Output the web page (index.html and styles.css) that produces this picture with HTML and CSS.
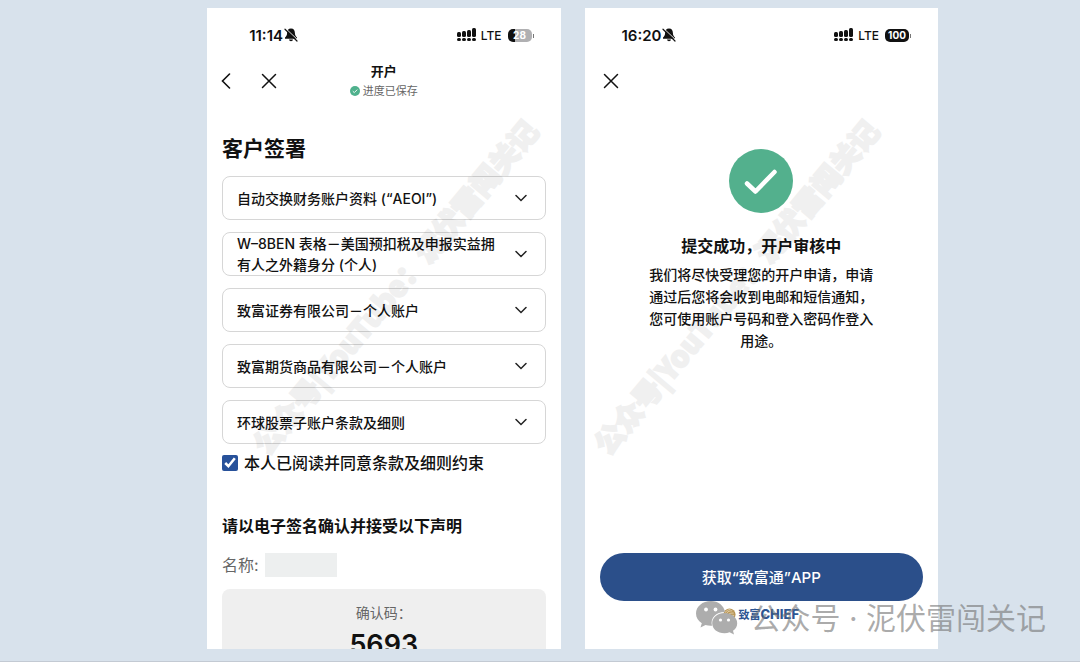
FILE: index.html
```html
<!DOCTYPE html>
<html lang="zh-CN">
<head>
    <meta charset="UTF-8">
    <meta name="viewport" content="width=device-width, initial-scale=1.0">
    <title>开户</title>
    <link rel="stylesheet" href="styles.css">
</head>
<body>
    <!-- Shared icons -->
    <svg class="sprite" aria-hidden="true">
        <symbol id="bell-off" viewBox="0 0 14 14">
            <path d="M7 0.600C4.200 0.600 3.200 2.600 3.100 5 3 7.600 2.100 8.500 1 9.600V10.800H13V9.600C11.900 8.500 11 7.600 10.900 5 10.800 2.600 9.800 0.600 7 0.600Z" fill="#111"/>
            <path d="M5 11.600H9C8.700 13.800 5.300 13.800 5 11.600Z" fill="#111"/>
            <path d="M2 0.800 13.800 12" stroke="#fff" stroke-width="1"/>
            <path d="M1 1.200 13 13" stroke="#111" stroke-width="1.200" stroke-linecap="round"/>
        </symbol>
        <symbol id="signal" viewBox="0 0 20 14">
            <g fill="#111">
                <rect x="0" y="4" width="4" height="5" rx="1.500"/>
                <rect x="5" y="3" width="4" height="6" rx="1.500"/>
                <rect x="10" y="2" width="4" height="7" rx="1.500"/>
                <rect x="15" y="0" width="4" height="9" rx="1.500"/>
                <rect x="0" y="10" width="4" height="3" rx="1.500"/>
                <rect x="5" y="10" width="4" height="3" rx="1.500"/>
                <rect x="10" y="10" width="4" height="3" rx="1.500"/>
                <rect x="15" y="10" width="4" height="3" rx="1.500"/>
            </g>
        </symbol>
        <symbol id="close" viewBox="0 0 16 16">
            <path d="M1.500 1.500 14.500 14.500M14.500 1.500 1.500 14.500" fill="none" stroke="#111" stroke-width="1.500" stroke-linecap="round"/>
        </symbol>
        <symbol id="back" viewBox="0 0 10 16">
            <path d="M8.500 1 1.500 8 8.500 15" fill="none" stroke="#111" stroke-width="1.600" stroke-linecap="round"/>
        </symbol>
        <symbol id="chevron" viewBox="0 0 12 8">
            <path d="M1 1.500 6 6.500 11 1.500" fill="none" stroke="#222" stroke-width="1.500" stroke-linecap="round"/>
        </symbol>
    </svg>

    <main class="stage">
        <!-- Signing screen -->
        <section class="phone">
            <div class="status-bar">
                <span class="time">11:14</span>
                <svg class="bell"><use href="#bell-off"/></svg>
                <svg class="signal"><use href="#signal"/></svg>
                <span class="network">LTE</span>
                <span class="battery battery-low">28</span>
            </div>
            <header class="nav-bar">
                <button class="icon-btn" aria-label="返回"><svg class="back-icon"><use href="#back"/></svg></button>
                <button class="icon-btn" aria-label="关闭"><svg class="close-icon"><use href="#close"/></svg></button>
                <div class="nav-title">
                    <h1>开户</h1>
                    <p>
                        <svg class="saved-icon" viewBox="0 0 10 10">
                            <circle cx="5" cy="5" r="5" fill="#4fb18d"/>
                            <path d="M2.800 5.200 4.300 6.600 7.300 3.600" fill="none" stroke="#fff" stroke-width="0.900"/>
                        </svg>
                        进度已保存
                    </p>
                </div>
            </header>
            <div class="content">
                <h2>客户签署</h2>
                <div class="doc-list">
                    <button class="doc" aria-expanded="false"><span>自动交换财务账户资料 (“AEOI”)</span><svg class="chevron"><use href="#chevron"/></svg></button>
                    <button class="doc" aria-expanded="false"><span>W–8BEN 表格－美国预扣税及申报实益拥有人之外籍身分 (个人)</span><svg class="chevron"><use href="#chevron"/></svg></button>
                    <button class="doc" aria-expanded="false"><span>致富证券有限公司－个人账户</span><svg class="chevron"><use href="#chevron"/></svg></button>
                    <button class="doc" aria-expanded="false"><span>致富期货商品有限公司－个人账户</span><svg class="chevron"><use href="#chevron"/></svg></button>
                    <button class="doc" aria-expanded="false"><span>环球股票子账户条款及细则</span><svg class="chevron"><use href="#chevron"/></svg></button>
                </div>
                <div class="agree">
                    <input type="checkbox" id="agree" checked>
                    <label for="agree">本人已阅读并同意条款及细则约束</label>
                </div>
                <h3>请以电子签名确认并接受以下声明</h3>
                <div class="name-row">
                    <span>名称:</span>
                    <span class="name-mask"></span>
                </div>
                <div class="code-card">
                    <p>确认码：</p>
                    <strong>5693</strong>
                </div>
            </div>
            <div class="watermark watermark-center" aria-hidden="true">公众号|YouTube：泥伏雷闯关记</div>
        </section>

        <!-- Submitted screen -->
        <section class="phone">
            <div class="status-bar">
                <span class="time">16:20</span>
                <svg class="bell"><use href="#bell-off"/></svg>
                <svg class="signal"><use href="#signal"/></svg>
                <span class="network">LTE</span>
                <span class="battery">100</span>
            </div>
            <header class="nav-bar">
                <button class="icon-btn" aria-label="关闭"><svg class="close-icon"><use href="#close"/></svg></button>
            </header>
            <div class="result">
                <svg class="result-icon" viewBox="0 0 64 64">
                    <circle cx="32" cy="32" r="32" fill="#53b08d"/>
                    <path d="M18 34.500 26.500 42.500 45.500 23" fill="none" stroke="#fff" stroke-width="4.500" stroke-linecap="round" stroke-linejoin="round"/>
                </svg>
                <h2>提交成功，开户审核中</h2>
                <p>我们将尽快受理您的开户申请，申请通过后您将会收到电邮和短信通知，您可使用账户号码和登入密码作登入用途。</p>
            </div>
            <footer class="actions">
                <button class="primary-btn">获取“致富通”APP</button>
                <div class="brand">
                    <svg class="brand-icon" viewBox="0 0 14 14">
                        <circle cx="7" cy="7" r="6.500" fill="#b89556"/>
                        <path d="M3 11C2 6 5 3 10 3M5 11.500C4 8 6 5 11.500 5.500M7.500 11C7 8.500 9 7.500 12 8M2 5C4 3 5 2 8 1.500" fill="none" stroke="#efe3c6" stroke-width="0.800"/>
                    </svg>
                    <span class="brand-cn">致富</span><span class="brand-en">CHIEF</span>
                </div>
            </footer>
            <div class="watermark watermark-left" aria-hidden="true">公众号|YouTube：泥伏雷闯关记</div>
        </section>

        <!-- Account signature over the lower right corner -->
        <div class="signature">
            <svg class="wechat" viewBox="0 0 42 34">
                <path d="M15 0C6.500 0 0 5.500 0 12.500 0 16.500 2.200 20 5.800 22.300L4.500 26.500 9.500 24C11.500 24.600 13.500 25 16 24.800 14 17 20 11 29 11 28 4.500 22 0 15 0Z"/>
                <path d="M28.500 12C21.500 12 16.200 16.500 16.200 22.200S21.500 32.200 28.500 32.200C30.300 32.200 32 31.900 33.600 31.300L38 33.500 37 29.800C39.800 28 41.200 25.200 41.200 22.200 41.200 16.500 35.500 12 28.500 12Z"/>
                <g fill="#fff">
                    <circle cx="10" cy="8.500" r="1.900"/>
                    <circle cx="19.500" cy="8.500" r="1.900"/>
                    <circle cx="24.500" cy="19" r="1.600"/>
                    <circle cx="32.500" cy="19" r="1.600"/>
                </g>
            </svg>
            <span>公众号 · 泥伏雷闯关记</span>
        </div>
    </main>
</body>
</html>
```

FILE: styles.css
```css
* {
    box-sizing: border-box;
}
body {
    margin: 0;
    background-color: #d8e2ec;
    color: #111;
    font-family: Inter, "Noto Sans CJK SC", sans-serif;
}
h1, h2, h3, p {
    margin: 0;
}
button {
    border: none;
    background: none;
    padding: 0;
    color: inherit;
    font-family: inherit;
    cursor: pointer;
}
svg {
    display: block;
    flex: none;
}
.sprite {
    position: absolute;
    width: 0;
    height: 0;
}
.stage {
    position: relative;
    display: flex;
    gap: 24px;
    height: 100vh;
    padding: 8px 142px 12px 207px;
    border-bottom: 1px solid #c3cad3;
}
.phone {
    position: relative;
    flex: 1;
    display: flex;
    flex-direction: column;
    background: white;
    overflow: hidden;
}

/* status bar */
.status-bar {
    flex: none;
    display: flex;
    align-items: center;
    height: 54px;
    padding: 0 29px 0 37px;
}
.time {
    min-width: 39px;
    font-size: 15px;
    font-weight: 600;
    text-align: right;
}
.bell {
    width: 14px;
    height: 14px;
    margin-left: 1px;
}
.signal {
    width: 20px;
    height: 14px;
    margin-left: auto;
}
.network {
    margin: 0 6px 0 4px;
    font-size: 12px;
    font-weight: 500;
}
.battery {
    position: relative;
    width: 24px;
    border-radius: 5px;
    background: #111;
    color: white;
    font-size: 10px;
    font-weight: 700;
    line-height: 13px;
    text-align: center;
}
.battery::after {
    content: "";
    position: absolute;
    left: 25px;
    top: 5px;
    width: 1px;
    height: 4px;
    background: #777;
}
.battery-low {
    background: linear-gradient(to right, #111 28%, #b0b0b2 28%);
}

/* navigation */
.nav-bar {
    position: relative;
    flex: none;
    display: flex;
    align-items: center;
    gap: 26px;
    height: 38px;
    padding: 0 14px;
}
.icon-btn {
    min-width: 10px;
}
.back-icon {
    width: 10px;
    height: 16px;
}
.close-icon {
    width: 16px;
    height: 16px;
    margin: 0 4px;
}
.nav-title {
    position: absolute;
    left: 0;
    right: 0;
    top: 0;
    text-align: center;
    pointer-events: none;
}
.nav-title h1 {
    font-size: 13px;
    font-weight: 700;
    line-height: 18px;
}
.nav-title p {
    display: flex;
    align-items: center;
    justify-content: center;
    gap: 3px;
    color: #666;
    font-size: 11px;
    line-height: 22px;
}
.saved-icon {
    width: 10px;
    height: 10px;
}

/* signing form */
.content {
    flex: none;
    padding: 33px 15px 0;
}
.content h2 {
    font-size: 21px;
    font-weight: 700;
    line-height: 32px;
}
.doc-list {
    display: flex;
    flex-direction: column;
    gap: 12px;
    margin-top: 11px;
}
.doc {
    display: flex;
    align-items: center;
    justify-content: space-between;
    gap: 10px;
    height: 44px;
    padding: 0 18px 0 14px;
    border: 1px solid #d6d6d6;
    border-radius: 8px;
    font-size: 14px;
    font-weight: 500;
    line-height: 21px;
    text-align: left;
}
.chevron {
    width: 12px;
    height: 8px;
}
.agree {
    display: flex;
    align-items: center;
    gap: 6px;
    margin-top: 7px;
    font-size: 16px;
    font-weight: 500;
    line-height: 24px;
}
.agree input {
    flex: none;
    width: 16px;
    height: 16px;
    margin: 0;
    accent-color: #27519a;
}
.content h3 {
    margin-top: 39px;
    font-size: 16px;
    font-weight: 700;
    line-height: 24px;
}
.name-row {
    display: flex;
    gap: 6px;
    margin-top: 15px;
    color: #666;
    font-size: 16px;
    line-height: 24px;
}
.name-mask {
    width: 72px;
    background: #edefef;
}
.code-card {
    height: 120px;
    margin-top: 12px;
    padding-top: 12px;
    border-radius: 8px;
    background: #efefef;
    text-align: center;
}
.code-card p {
    color: #666;
    font-size: 14px;
    line-height: 24px;
}
.code-card strong {
    display: block;
    font-size: 27px;
    font-weight: 600;
    line-height: 40px;
}

/* submitted screen */
.result {
    display: flex;
    flex-direction: column;
    align-items: center;
    padding-top: 49px;
}
.result-icon {
    width: 64px;
    height: 64px;
}
.result h2 {
    margin-top: 21px;
    font-size: 16px;
    font-weight: 700;
    line-height: 24px;
}
.result p {
    width: 232px;
    margin-top: 6px;
    font-size: 14px;
    font-weight: 500;
    line-height: 22px;
    text-align: center;
}
.actions {
    margin-top: auto;
    padding: 0 15px 27px;
}
.primary-btn {
    display: block;
    width: 100%;
    height: 48px;
    padding-bottom: 2px;
    border-radius: 24px;
    background: #2b4f8a;
    color: white;
    font-size: 15px;
    font-weight: 500;
}
.brand {
    display: flex;
    align-items: center;
    justify-content: center;
    height: 16px;
    margin-top: 5px;
    color: #2d5592;
    font-size: 11px;
    font-weight: 700;
}
.brand-icon {
    width: 13px;
    height: 13px;
    margin-right: 2px;
}
.brand-en {
    font-size: 13px;
    font-weight: 800;
}

/* overlays */
.watermark {
    position: absolute;
    top: 278px;
    color: #000;
    opacity: 0.055;
    font-family: "Noto Sans CJK SC", sans-serif;
    font-size: 29px;
    font-weight: 900;
    line-height: 32px;
    white-space: nowrap;
    -webkit-text-stroke: 2px #000;
    transform: translate(-50%, -50%) rotate(-50deg);
    pointer-events: none;
}
.watermark-center {
    left: 187px;
}
.watermark-left {
    left: 150px;
}
.signature {
    position: absolute;
    right: 34px;
    bottom: 23px;
    display: flex;
    align-items: center;
    gap: 12px;
    color: rgba(115, 115, 115, 0.6);
    font-size: 30px;
    font-weight: 400;
    line-height: 40px;
    white-space: nowrap;
    pointer-events: none;
}
.wechat {
    width: 42px;
    height: 34px;
    fill: #adadad;
}
```
